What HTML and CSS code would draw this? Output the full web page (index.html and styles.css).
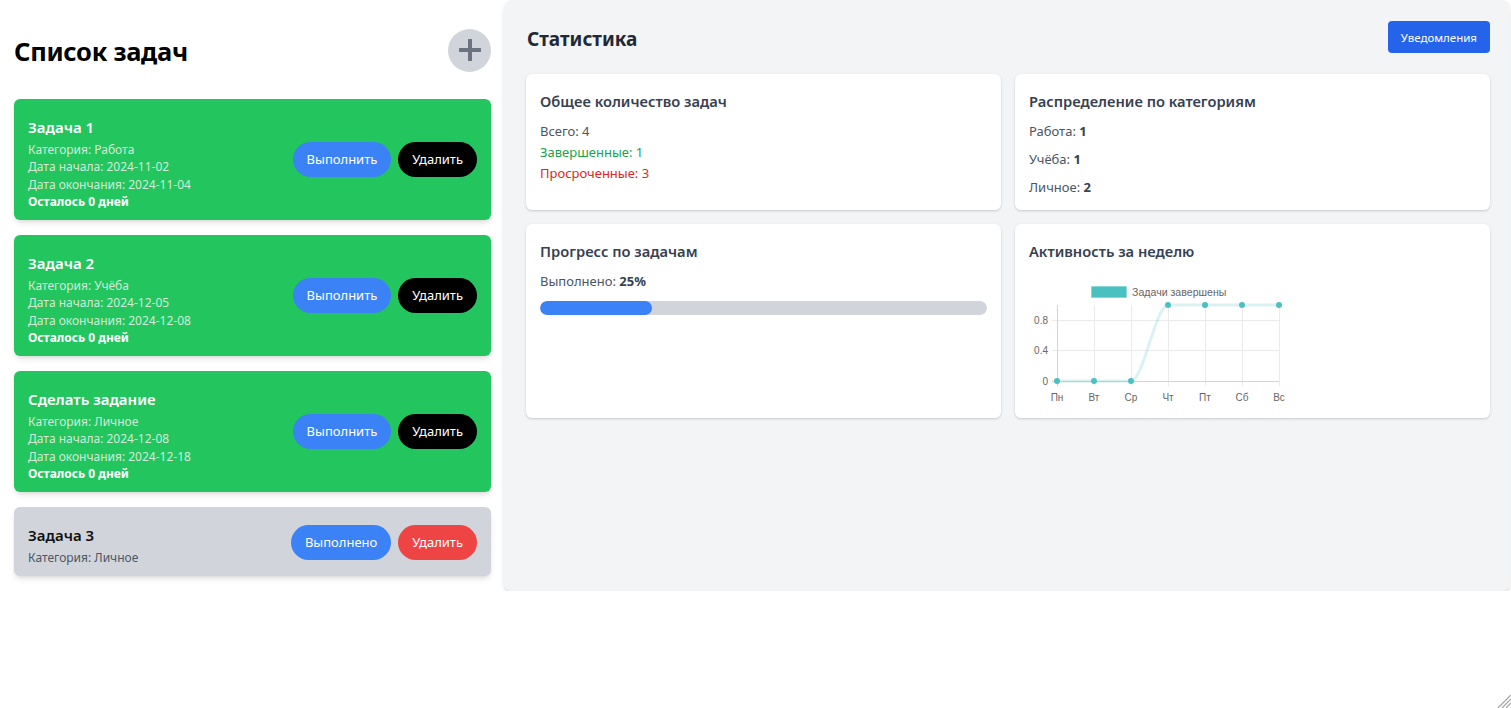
FILE: index.html
```html
<!DOCTYPE html>
<html lang="ru">
<head>
<meta charset="utf-8">
<title>Список задач</title>
<link rel="stylesheet" href="styles.css">
</head>
<body>
<div class="app">
  <section class="tasks">
    <header class="tasks-head">
      <h1>Список задач</h1>
      <button class="add" aria-label="Добавить">
        <svg width="22" height="22" viewBox="0 0 22 22"><path d="M11 1v20M1 11h20" stroke="#6b7280" stroke-width="4" stroke-linecap="round"/></svg>
      </button>
    </header>
    <div class="task-list">
      <article class="task task--active">
        <div class="task-info">
          <h3>Задача 1</h3>
          <p>Категория: Работа</p>
          <p>Дата начала: 2024-11-02</p>
          <p>Дата окончания: 2024-11-04</p>
          <p class="left">Осталось 0 дней</p>
        </div>
        <div class="task-actions">
          <button class="btn btn-blue">Выполнить</button>
          <button class="btn btn-black">Удалить</button>
        </div>
      </article>
      <article class="task task--active">
        <div class="task-info">
          <h3>Задача 2</h3>
          <p>Категория: Учёба</p>
          <p>Дата начала: 2024-12-05</p>
          <p>Дата окончания: 2024-12-08</p>
          <p class="left">Осталось 0 дней</p>
        </div>
        <div class="task-actions">
          <button class="btn btn-blue">Выполнить</button>
          <button class="btn btn-black">Удалить</button>
        </div>
      </article>
      <article class="task task--active">
        <div class="task-info">
          <h3>Сделать задание</h3>
          <p>Категория: Личное</p>
          <p>Дата начала: 2024-12-08</p>
          <p>Дата окончания: 2024-12-18</p>
          <p class="left">Осталось 0 дней</p>
        </div>
        <div class="task-actions">
          <button class="btn btn-blue">Выполнить</button>
          <button class="btn btn-black">Удалить</button>
        </div>
      </article>
      <article class="task task--done">
        <div class="task-info">
          <h3>Задача 3</h3>
          <p>Категория: Личное</p>
        </div>
        <div class="task-actions">
          <button class="btn btn-blue">Выполнено</button>
          <button class="btn btn-red">Удалить</button>
        </div>
      </article>
    </div>
  </section>

  <section class="stats">
    <header class="stats-head">
      <h2>Статистика</h2>
      <button class="notify">Уведомления</button>
    </header>
    <div class="stats-grid">
      <div class="card">
        <h4>Общее количество задач</h4>
        <ul class="plain">
          <li>Всего: 4</li>
          <li class="green">Завершенные: 1</li>
          <li class="red">Просроченные: 3</li>
        </ul>
      </div>
      <div class="card">
        <h4>Распределение по категориям</h4>
        <ul class="cats">
          <li>Работа: <b>1</b></li>
          <li>Учёба: <b>1</b></li>
          <li>Личное: <b>2</b></li>
        </ul>
      </div>
      <div class="card">
        <h4>Прогресс по задачам</h4>
        <p class="done-line">Выполнено: <b>25%</b></p>
        <div class="bar"><div class="bar-fill" style="width:25%"></div></div>
      </div>
      <div class="card">
        <h4>Активность за неделю</h4>
        <svg class="chart" width="270" height="135" viewBox="0 -1 270 135">
          <rect x="61.5" y="15.5" width="35" height="11" fill="#4bc0c0" stroke="rgba(75,192,192,0.25)" stroke-width="1"/>
          <text x="102" y="24.5" class="legend">Задачи завершены</text>
          <g stroke="#ebebeb" stroke-width="1">
            <line x1="22" y1="49.5" x2="249" y2="49.5"/>
            <line x1="22" y1="79.5" x2="249" y2="79.5"/>
            <line x1="64.5" y1="34" x2="64.5" y2="115"/>
            <line x1="101.5" y1="34" x2="101.5" y2="115"/>
            <line x1="138.5" y1="34" x2="138.5" y2="115"/>
            <line x1="175.5" y1="34" x2="175.5" y2="115"/>
            <line x1="212.5" y1="34" x2="212.5" y2="115"/>
            <line x1="249.5" y1="34" x2="249.5" y2="115"/>
          </g>
          <g stroke="#d4d4d4" stroke-width="1">
            <line x1="27.5" y1="34" x2="27.5" y2="115"/>
            <line x1="22" y1="110.5" x2="249" y2="110.5"/>
          </g>
          <g class="ticks" text-anchor="end">
            <text x="18" y="53">0.8</text>
            <text x="18" y="83">0.4</text>
            <text x="18" y="114">0</text>
          </g>
          <g class="ticks" text-anchor="middle">
            <text x="27" y="130">Пн</text>
            <text x="64" y="130">Вт</text>
            <text x="101" y="130">Ср</text>
            <text x="138" y="130">Чт</text>
            <text x="175" y="130">Пт</text>
            <text x="212" y="130">Сб</text>
            <text x="249" y="130">Вс</text>
          </g>
          <path d="M27 110 L101 110 C113.3 110 125.7 34 138 34 L249 34" fill="none" stroke="rgba(75,192,192,0.2)" stroke-width="3"/>
          <g fill="#4bc0c0">
            <circle cx="27" cy="110" r="3"/>
            <circle cx="64" cy="110" r="3"/>
            <circle cx="101" cy="110" r="3"/>
            <circle cx="138" cy="34" r="3"/>
            <circle cx="175" cy="34" r="3"/>
            <circle cx="212" cy="34" r="3"/>
            <circle cx="249" cy="34" r="3"/>
          </g>
        </svg>
      </div>
    </div>
  </section>
</div>
<svg class="resizer" width="15" height="15" viewBox="0 0 15 15">
  <g stroke="#a3a3a3" stroke-width="1.2">
    <line x1="15" y1="2" x2="2" y2="15"/>
    <line x1="15" y1="6" x2="6" y2="15"/>
    <line x1="15" y1="10" x2="10" y2="15"/>
  </g>
</svg>
</body>
</html>
```

FILE: styles.css
```css
* { box-sizing: border-box; }
html, body { margin: 0; padding: 0; background: #fff; }
body {
  font-family: "Noto Sans", "Open Sans", sans-serif;
  color: #111827;
}
h1, h2, h3, h4, p, ul { margin: 0; padding: 0; }
ul { list-style: none; }
button { font-family: inherit; border: 0; cursor: pointer; }

.app { display: flex; align-items: stretch; }

/* Left column */
.tasks {
  width: 504px;
  flex: none;
  padding: 28px 13px 15px 14px;
}
.tasks-head {
  display: flex;
  align-items: center;
  justify-content: space-between;
  height: 43px;
  margin-bottom: 28px;
}
.tasks-head h1 {
  font-size: 25.5px;
  font-weight: 700;
  color: #000;
  letter-spacing: -0.3px;
  padding-top: 3px;
}
.add {
  width: 43px;
  height: 43px;
  border-radius: 50%;
  background: #d1d5db;
  display: flex;
  align-items: center;
  justify-content: center;
  padding: 0;
  margin-top: 1px;
}
.task-list { display: flex; flex-direction: column; gap: 15.5px; }
.task {
  display: flex;
  align-items: center;
  justify-content: space-between;
  border-radius: 6px;
  padding: 16px 14px 9px;
  box-shadow: 0 4px 6px -1px rgba(0,0,0,0.1), 0 2px 4px -2px rgba(0,0,0,0.1);
}
.task--active { background: #22c55e; color: #fff; }
.task--done { background: #d1d5db; color: #111; }
.task h3 {
  font-size: 15px;
  line-height: 24px;
  font-weight: 600;
}
.task h3 + p { margin-top: 1.5px; }
.task p {
  font-size: 12px;
  line-height: 17.5px;
}
.task--active p { color: #d3ecd9; }
.task--active p.left { color: #fff; font-weight: 700; }
.task--done p { color: #4b5563; line-height: 18px; }
.task-actions { display: flex; gap: 7px; margin-bottom: 7px; }
.task--done .task-actions { margin-bottom: 5px; }
.btn {
  height: 35px;
  padding: 0 14px;
  border-radius: 18px;
  font-size: 13px;
  color: #fff;
}
.btn-blue { background: #3b82f6; }
.btn-black { background: #000; }
.btn-red { background: #ef4444; }

/* Right panel */
.stats {
  width: 1006px;
  flex: none;
  background: #f3f4f6;
  border-radius: 8px;
  padding: 21px 20px 0 22px;
  box-shadow: 0 4px 6px -1px rgba(0,0,0,0.12), 0 2px 4px -2px rgba(0,0,0,0.1);
}
.stats-head {
  display: flex;
  align-items: center;
  justify-content: space-between;
  height: 32px;
  margin-bottom: 21px;
}
.stats-head h2 {
  font-size: 19px;
  font-weight: 700;
  color: #1f2937;
  padding-left: 1px;
  padding-top: 3px;
}
.notify {
  height: 32px;
  padding: 0 13px;
  border-radius: 4px;
  background: #2563eb;
  color: #fff;
  font-size: 11.5px;
}
.stats-grid {
  display: grid;
  grid-template-columns: 1fr 1fr;
  gap: 14px;
}
.card {
  background: #fff;
  border-radius: 6px;
  padding: 16px 14px 13px;
  box-shadow: 0 1px 3px rgba(0,0,0,0.12), 0 1px 2px rgba(0,0,0,0.06);
}
.card h4 {
  font-size: 14.7px;
  line-height: 22px;
  font-weight: 600;
  color: #374151;
  margin-bottom: 8px;
}
.plain li {
  font-size: 13px;
  line-height: 21px;
  color: #4b5563;
}
.plain { padding-top: 1px; }
.plain li.green { color: #16a34a; }
.plain li.red { color: #dc2626; }
.cats { display: flex; flex-direction: column; gap: 8px; padding-top: 1px; }
.cats li { font-size: 13px; line-height: 20px; color: #4b5563; }
.cats b, .done-line b { color: #374151; font-weight: 700; }
.done-line { font-size: 13px; line-height: 21px; color: #4b5563; margin-bottom: 9px; padding-top: 1px; }
.bar { height: 14px; border-radius: 7px; background: #d1d5db; overflow: hidden; }
.bar-fill { height: 100%; background: #3b82f6; border-radius: 7px; }
.chart { display: block; margin-left: 1px; }
.chart text { font-family: "Liberation Sans", Arial, sans-serif; fill: #666; }
.chart .legend { font-size: 10.6px; }
.chart .ticks text { font-size: 10px; }

.resizer { position: fixed; right: 0; bottom: 0; }
```
